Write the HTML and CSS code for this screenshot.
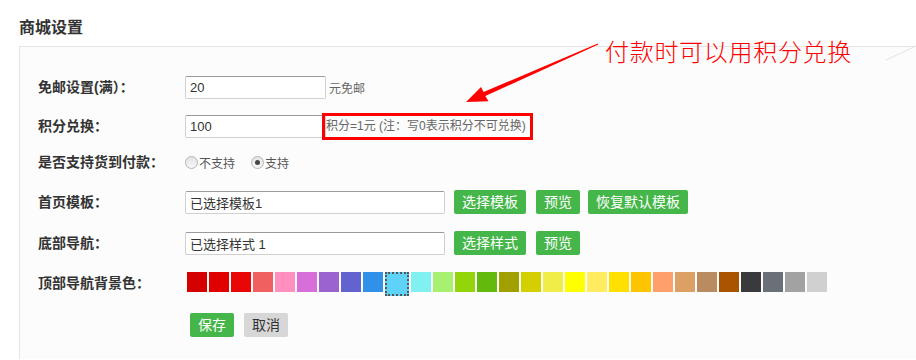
FILE: index.html
```html
<!DOCTYPE html>
<html>
<head>
  <meta charset="UTF-8">
  <meta name="viewport" content="width=device-width, initial-scale=1.0">
  <title>商城设置</title>
  <link rel="stylesheet" href="styles.css">
</head>
<body>
  <h2 class="page-title">商城设置</h2>

  <div class="panel">
    <div class="row row-1">
      <label class="row-label">免邮设置(满）：</label>
      <input class="text-input short" type="text" value="20">
      <span class="unit">元免邮</span>
    </div>

    <div class="row row-2">
      <label class="row-label">积分兑换：</label>
      <input class="text-input short" type="text" value="100">
      <span class="hint-box">积分=1元 (注：写0表示积分不可兑换)</span>
    </div>

    <div class="row row-3">
      <label class="row-label">是否支持货到付款：</label>
      <span class="radio"></span><span class="radio-text">不支持</span>
      <span class="radio checked"></span><span class="radio-text">支持</span>
    </div>

    <div class="row row-4">
      <label class="row-label">首页模板：</label>
      <input class="text-input long" type="text" value="已选择模板1">
      <button class="btn">选择模板</button>
      <button class="btn">预览</button>
      <button class="btn btn-last">恢复默认模板</button>
    </div>

    <div class="row row-5">
      <label class="row-label">底部导航：</label>
      <input class="text-input long" type="text" value="已选择样式 1">
      <button class="btn">选择样式</button>
      <button class="btn">预览</button>
    </div>

    <div class="row row-6">
      <label class="row-label">顶部导航背景色：</label>
      <div class="swatches">
        <span class="swatch" style="background:#d50000"></span>
        <span class="swatch" style="background:#e00000"></span>
        <span class="swatch" style="background:#e80606"></span>
        <span class="swatch" style="background:#f06060"></span>
        <span class="swatch" style="background:#ff8fbf"></span>
        <span class="swatch" style="background:#d86ed8"></span>
        <span class="swatch" style="background:#9b63d0"></span>
        <span class="swatch" style="background:#6363d0"></span>
        <span class="swatch" style="background:#3190e8"></span>
        <span class="swatch selected" style="background:#5fd2f8"></span>
        <span class="swatch" style="background:#80f0f0"></span>
        <span class="swatch" style="background:#a8f070"></span>
        <span class="swatch" style="background:#94d40a"></span>
        <span class="swatch" style="background:#64ba0c"></span>
        <span class="swatch" style="background:#a0a000"></span>
        <span class="swatch" style="background:#d4d000"></span>
        <span class="swatch" style="background:#f0ec48"></span>
        <span class="swatch" style="background:#ffff00"></span>
        <span class="swatch" style="background:#ffec60"></span>
        <span class="swatch" style="background:#ffe000"></span>
        <span class="swatch" style="background:#ffc400"></span>
        <span class="swatch" style="background:#ffa06c"></span>
        <span class="swatch" style="background:#dca064"></span>
        <span class="swatch" style="background:#ba8a60"></span>
        <span class="swatch" style="background:#a85400"></span>
        <span class="swatch" style="background:#3a3a3c"></span>
        <span class="swatch" style="background:#6a7078"></span>
        <span class="swatch" style="background:#a2a2a2"></span>
        <span class="swatch" style="background:#d0d0d0"></span>
      </div>
    </div>

    <div class="row row-7">
      <span class="row-label"></span>
      <div class="actions">
        <button class="btn">保存</button>
        <button class="btn btn-gray">取消</button>
      </div>
    </div>
  </div>

  <!-- red annotation drawn on top of the screenshot -->
  <div class="annotation">
    <svg class="arrow" width="916" height="360" viewBox="0 0 916 360">
      <polygon points="466,102 481,87 483.6,92.1 597.8,43.4 598.3,44.6 485.3,96 488.5,101.2" fill="#ff0000"/>
      <line x1="886" y1="60" x2="916" y2="46" stroke="#e2e2e2" stroke-width="1"/>
    </svg>
    <span class="note">付款时可以用积分兑换</span>
  </div>
</body>
</html>
```

FILE: styles.css
```css
body {
  margin: 0;
  background-color: #fff;
  color: #333;
  font-family: "Liberation Sans", "Noto Sans CJK SC", sans-serif;
  position: relative;
}

.page-title {
  margin: 0;
  padding: 16px 19px 0;
  font-size: 16px;
  line-height: 24px;
  font-weight: bold;
  color: #333;
}

.panel {
  margin: 6px 0 0 19px;
  border-top: 1px solid #e6e6e6;
  border-left: 1px solid #e6e6e6;
  background-color: #fcfcfc;
  padding: 28px 0 22px 18px;
}

.row {
  display: flex;
  align-items: center;
  height: 24px;
}

.row-1 { margin-bottom: 15px; }
.row-2 { margin-bottom: 12px; }
.row-3 { margin-bottom: 16px; }
.row-4 { margin-bottom: 17px; }
.row-5 { margin-bottom: 16px; }
.row-6 { margin-bottom: 18px; align-items: flex-start; }

.row-label {
  width: 147px;
  flex-shrink: 0;
  font-size: 14px;
  font-weight: bold;
  color: #333;
  line-height: 24px;
}

.text-input {
  box-sizing: border-box;
  height: 23px;
  padding: 0 4px;
  border: 1px solid #d0d0d0;
  border-top-color: #9a9a9a;
  border-radius: 2px;
  background-color: #fff;
  font-family: inherit;
  font-size: 13px;
  color: #333;
  outline: none;
}

.text-input.short {
  width: 141px;
}

.text-input.long {
  width: 260px;
}

.unit {
  margin-left: 3px;
  font-size: 12px;
  color: #666;
}

.hint-box {
  margin-left: -4px;
  box-sizing: border-box;
  width: 211px;
  height: 27px;
  border: 3px solid #ff0000;
  padding-left: 1px;
  font-size: 12px;
  line-height: 21px;
  color: #666;
  white-space: nowrap;
}

.radio {
  box-sizing: border-box;
  width: 13px;
  height: 13px;
  border: 1px solid #b4b4b4;
  border-radius: 50%;
  background: linear-gradient(#e4e4e4, #f6f6f6);
  position: relative;
}

.radio.checked {
  margin-left: 16px;
}

.radio.checked::after {
  content: "";
  position: absolute;
  left: 3px;
  top: 3px;
  width: 5px;
  height: 5px;
  border-radius: 50%;
  background-color: #444;
}

.radio-text {
  margin-left: 1px;
  font-size: 12px;
  color: #555;
}

.btn {
  height: 24px;
  margin-left: 9px;
  padding: 0 8px;
  border: none;
  border-radius: 2px;
  background-color: #45b649;
  color: #fff;
  font-family: inherit;
  font-size: 14px;
  line-height: 24px;
  cursor: pointer;
}

.btn + .btn {
  margin-left: 10px;
}

.btn + .btn-last {
  margin-left: 8px;
}

.btn-gray {
  background-color: #d7d7d7;
  color: #333;
}

.swatches {
  display: flex;
  align-items: flex-start;
  margin-left: 2px;
  margin-top: 1px;
}

.swatch {
  width: 20px;
  height: 20px;
  margin-right: 2px;
  cursor: pointer;
}

.swatch.selected {
  border: 2px dotted #555;
}

.actions {
  display: flex;
  margin-left: -4px;
}

.annotation {
  position: absolute;
  left: 0;
  top: 0;
  width: 916px;
  height: 360px;
  pointer-events: none;
}

.arrow {
  position: absolute;
  left: 0;
  top: 0;
}

.note {
  position: absolute;
  left: 605px;
  top: 38px;
  font-family: "Noto Sans CJK SC", sans-serif;
  font-size: 24px;
  font-weight: 300;
  line-height: 26px;
  letter-spacing: 0.7px;
  color: #ff0000;
  white-space: nowrap;
}
```
